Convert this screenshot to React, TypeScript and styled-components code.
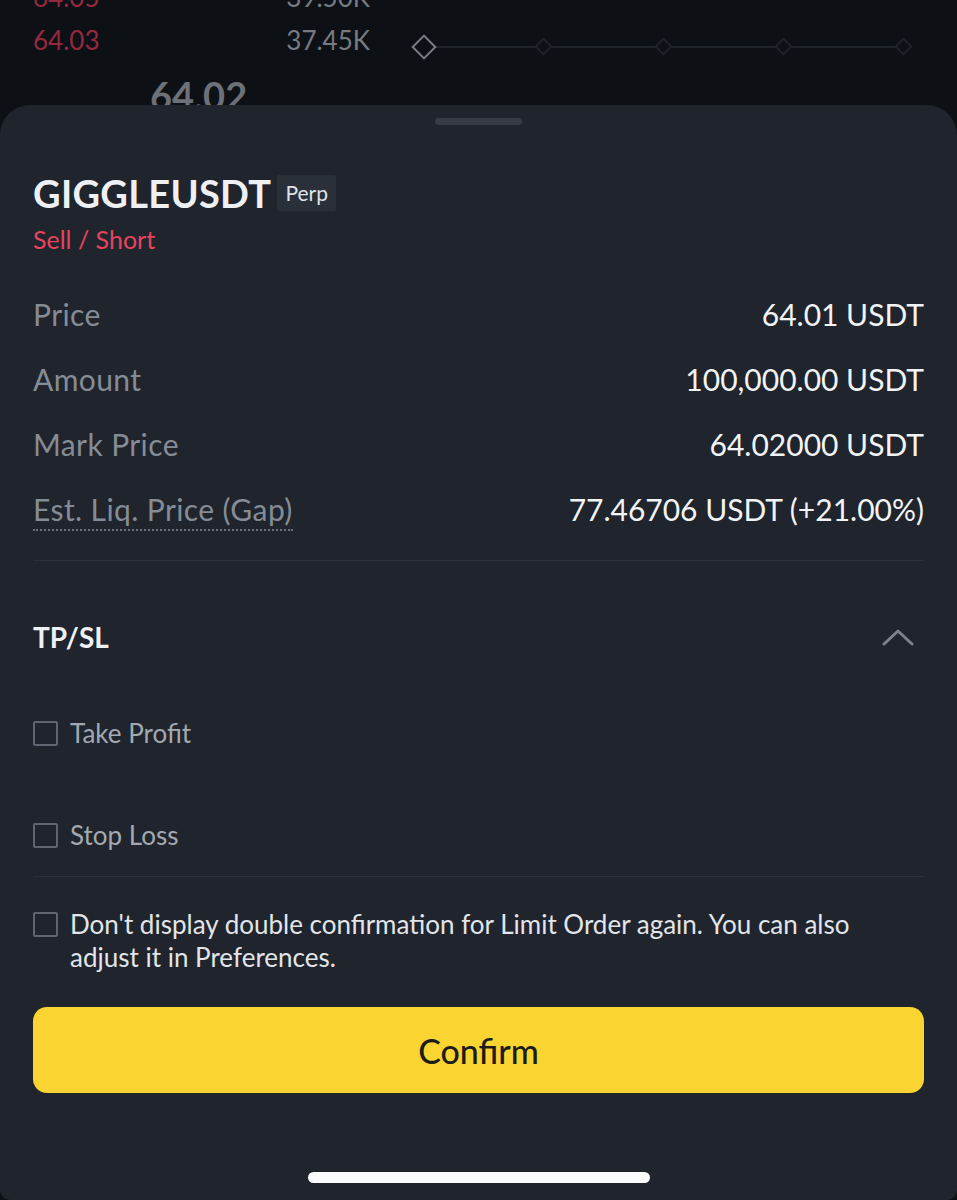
import styled, { createGlobalStyle } from 'styled-components';

const GlobalStyle = createGlobalStyle`
    html, body {
        margin: 0;
        padding: 0;
        background: #0d1015;
    }
    * {
        box-sizing: border-box;
    }
`

const Page = styled.div`
    width: 957px;
    height: 1200px;
    display: flex;
    flex-direction: column;
    overflow: hidden;
    background: #0d1015;
    font-family: Lato, "Open Sans", sans-serif;
`

const Backdrop = styled.div`
    height: 105px;
    flex-shrink: 0;
    display: flex;
    padding-left: 33px;
    overflow: hidden;
    opacity: 0.75;
`

const BookCol = styled.div`
    width: 337px;
    flex-shrink: 0;
    display: flex;
    flex-direction: column;
    margin-top: -25px;
`

const BookRow = styled.div`
    height: 43px;
    flex-shrink: 0;
    display: flex;
    align-items: center;
    justify-content: space-between;
    font-size: 26px;
`

const BookPrice = styled.span`
    color: #c0324d;
`

const BookQty = styled.span`
    color: #9a9ea6;
`

const MidPrice = styled.div`
    flex-shrink: 0;
    margin-top: 11px;
    padding-left: 117px;
    font-size: 38px;
    line-height: 46px;
    font-weight: 700;
    color: #8c9098;
`

const SliderCol = styled.div`
    width: 520px;
    margin-left: 40px;
    padding-top: 35px;
`

const SliderTrack = styled.div`
    position: relative;
    height: 24px;
    width: 500px;
`

const TrackLine = styled.div`
    position: absolute;
    left: 14px;
    right: 7px;
    top: 11px;
    height: 2px;
    background: #262a31;
`

const Diamond = styled.div<{ $big?: boolean }>`
    position: absolute;
    top: ${p => (p.$big ? 3 : 5)}px;
    width: ${p => (p.$big ? 18 : 13)}px;
    height: ${p => (p.$big ? 18 : 13)}px;
    transform: rotate(45deg);
    border: ${p => (p.$big ? '2px solid #9da1a8' : '2px solid #252930')};
    background: #0d1015;
`

const Sheet = styled.div`
    flex: 1;
    background: #1f242d;
    border-radius: 30px 30px 10px 10px;
    display: flex;
    flex-direction: column;
    padding: 0 33px;
    position: relative;
`

const Handle = styled.div`
    align-self: center;
    width: 87px;
    height: 7px;
    margin-top: 13px;
    border-radius: 4px;
    background: #363c46;
`

const TitleRow = styled.div`
    display: flex;
    align-items: center;
    gap: 6px;
    margin-top: 46px;
`

const Symbol = styled.div`
    font-size: 38px;
    line-height: 44px;
    font-weight: 700;
    color: #eef0f3;
    letter-spacing: 0.3px;
`

const Badge = styled.div`
    background: #2a303a;
    color: #dfe2e6;
    font-size: 21px;
    line-height: 26px;
    padding: 5px 8px;
    border-radius: 2px;
`

const Side = styled.div`
    margin-top: 9px;
    font-size: 25px;
    line-height: 30px;
    color: #e9435e;
`

const InfoList = styled.div`
    display: flex;
    flex-direction: column;
    margin-top: 27px;
`

const InfoRow = styled.div`
    height: 65px;
    display: flex;
    align-items: center;
    justify-content: space-between;
    font-size: 30px;
`

const Label = styled.span<{ $dotted?: boolean }>`
    color: #868c96;
    letter-spacing: 0.4px;
    padding-bottom: ${p => (p.$dotted ? '2px' : '0')};
    border-bottom: ${p => (p.$dotted ? '2px dotted #6b717b' : 'none')};
    margin-top: ${p => (p.$dotted ? '4px' : '0')};
`

const Value = styled.span`
    color: #f1f3f5;
`

const Divider = styled.div<{ $top: number }>`
    height: 1px;
    flex-shrink: 0;
    background: #2c323c;
    margin-top: ${p => p.$top}px;
`

const SectionHead = styled.div`
    height: 152px;
    display: flex;
    align-items: center;
    justify-content: space-between;
`

const SectionTitle = styled.div`
    font-size: 28px;
    font-weight: 700;
    color: #eef0f3;
`

const Chevron = styled.svg`
    margin-right: 10px;
`

const CheckRow = styled.label<{ $gap?: number }>`
    display: flex;
    align-items: center;
    gap: 12px;
    height: 40px;
    margin-bottom: ${p => p.$gap ?? 0}px;
    font-size: 26px;
    color: #a4a9b1;
`

const Box = styled.span`
    width: 25px;
    height: 25px;
    flex-shrink: 0;
    border: 2px solid #5f6570;
    border-radius: 2px;
`

const NoticeRow = styled.label`
    display: flex;
    align-items: flex-start;
    gap: 12px;
    margin-top: 31px;
    font-size: 26px;
    line-height: 33px;
    color: #e2e5e9;
`

const NoticeBox = styled(Box)`
    margin-top: 4px;
`

const ConfirmButton = styled.button`
    margin-top: 33px;
    height: 86px;
    width: 100%;
    flex-shrink: 0;
    border: none;
    border-radius: 14px;
    background: #fad431;
    color: #1c1c1c;
    font-family: Lato, "Open Sans", sans-serif;
    font-size: 34px;
    font-weight: 500;
`

const HomeBar = styled.div`
    position: absolute;
    left: 308px;
    bottom: 17px;
    width: 342px;
    height: 11px;
    border-radius: 6px;
    background: #fbfcfd;
`

const rows = [
    { label: 'Price', value: '64.01 USDT' },
    { label: 'Amount', value: '100,000.00 USDT' },
    { label: 'Mark Price', value: '64.02000 USDT' },
    { label: 'Est. Liq. Price (Gap)', value: '77.46706 USDT (+21.00%)', dotted: true },
]

const ChevronUp = () => (
    <Chevron width="32" height="18" viewBox="0 0 32 18" fill="none">
        <path d="M2 16 L16 3 L30 16" stroke="#7c828c" strokeWidth="3" strokeLinecap="round" strokeLinejoin="round" />
    </Chevron>
)

const App = () => {
    return (
        <Page>
            <GlobalStyle />
            <Backdrop>
                <BookCol>
                    <BookRow><BookPrice>64.05</BookPrice><BookQty>39.50K</BookQty></BookRow>
                    <BookRow><BookPrice>64.03</BookPrice><BookQty>37.45K</BookQty></BookRow>
                    <MidPrice>64.02</MidPrice>
                </BookCol>
                <SliderCol>
                    <SliderTrack>
                        <TrackLine />
                        <Diamond $big style={{ left: 5 }} />
                        {[133, 253, 373, 493].map(x => <Diamond key={x} style={{ left: x - 6.5 }} />)}
                    </SliderTrack>
                </SliderCol>
            </Backdrop>
            <Sheet>
                <Handle />
                <TitleRow>
                    <Symbol>GIGGLEUSDT</Symbol>
                    <Badge>Perp</Badge>
                </TitleRow>
                <Side>Sell / Short</Side>
                <InfoList>
                    {rows.map(r => (
                        <InfoRow key={r.label}>
                            <Label $dotted={r.dotted}>{r.label}</Label>
                            <Value>{r.value}</Value>
                        </InfoRow>
                    ))}
                </InfoList>
                <Divider $top={19} />
                <SectionHead>
                    <SectionTitle>TP/SL</SectionTitle>
                    <ChevronUp />
                </SectionHead>
                <CheckRow $gap={62}><Box />Take Profit</CheckRow>
                <CheckRow><Box />Stop Loss</CheckRow>
                <Divider $top={21} />
                <NoticeRow>
                    <NoticeBox />
                    <span>Don't display double confirmation for Limit Order again. You can also adjust it in Preferences.</span>
                </NoticeRow>
                <ConfirmButton>Confirm</ConfirmButton>
                <HomeBar />
            </Sheet>
        </Page>
    )
}

export default App
